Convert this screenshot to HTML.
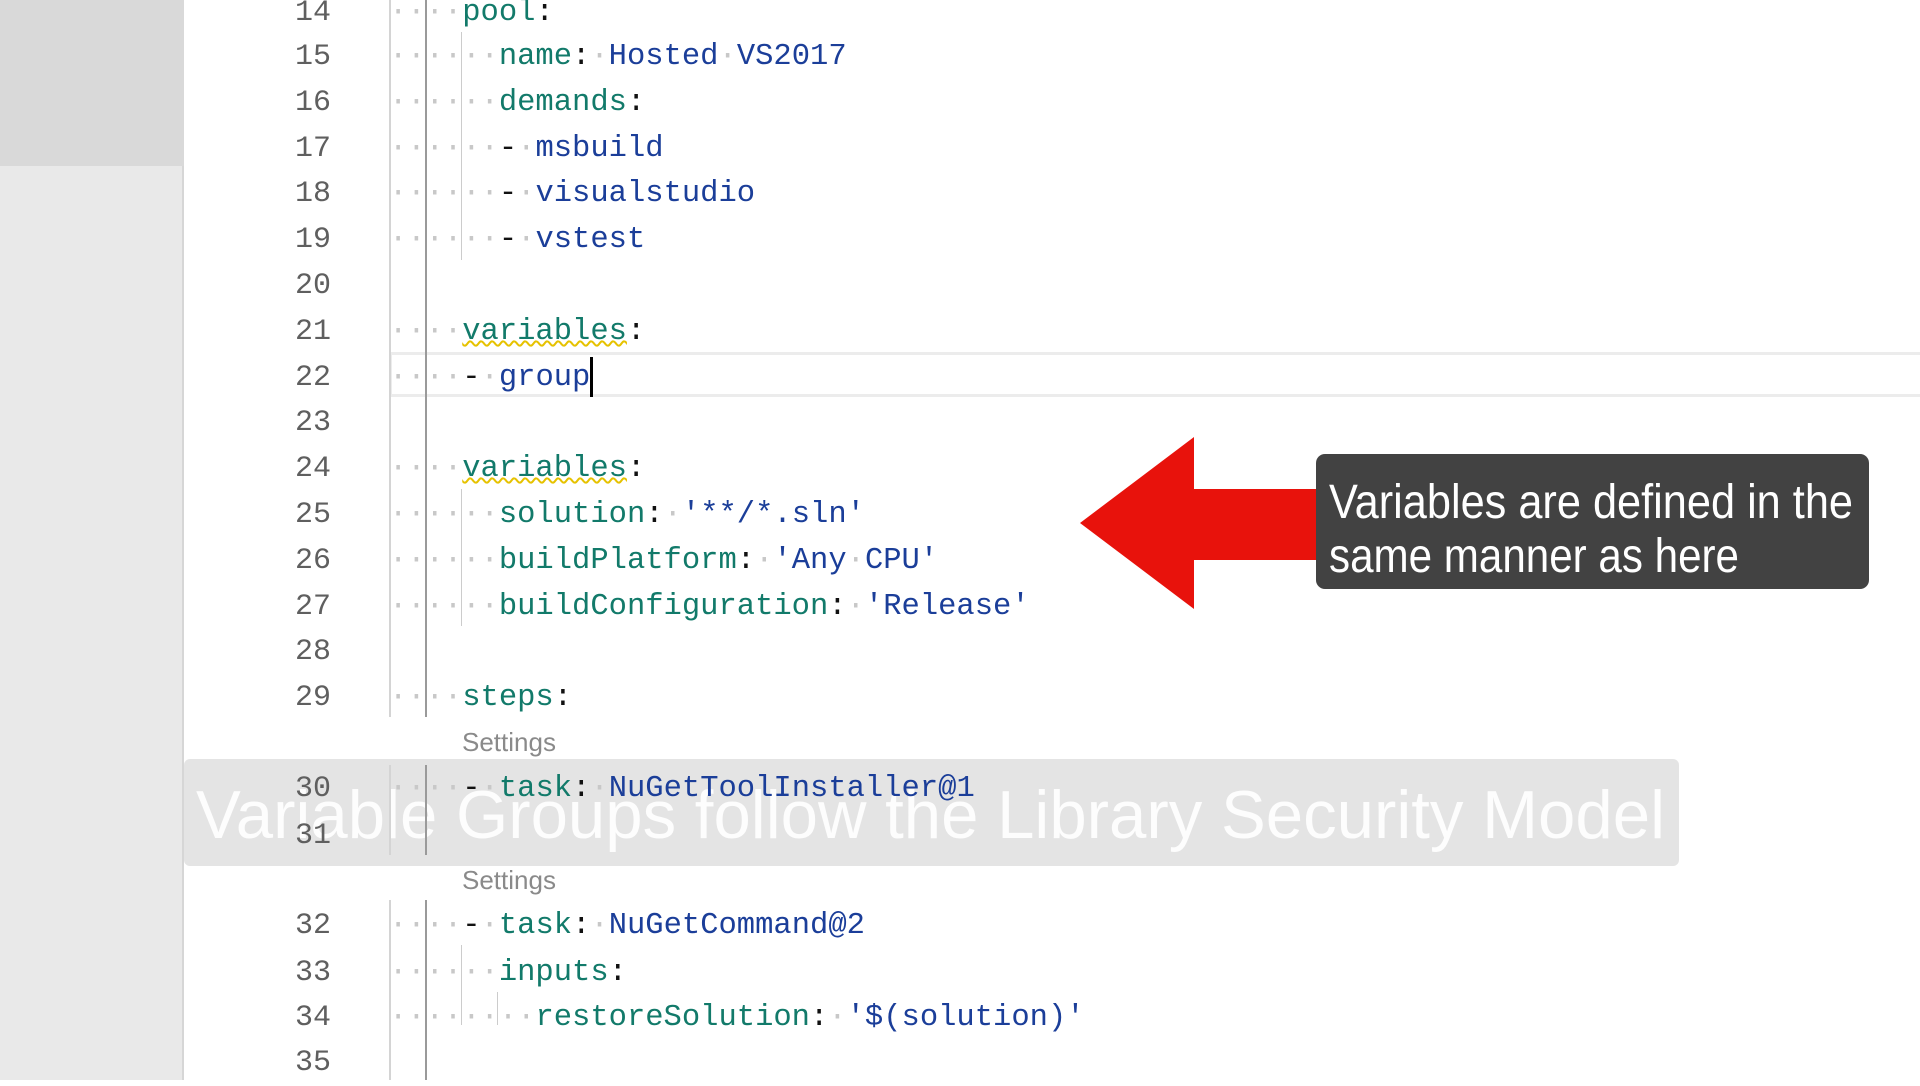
<!DOCTYPE html>
<html><head><meta charset="utf-8"><style>
*{margin:0;padding:0}
body{width:1920px;height:1080px;overflow:hidden;background:#fff;position:relative;font-family:"Liberation Mono",monospace}
.g1{position:absolute;left:0;top:0;width:184px;height:166px;background:#d9d9d9}
.g2{position:absolute;left:0;top:166px;width:184px;height:914px;background:#e9e9e9;border-right:2px solid #d6d6d6;box-sizing:border-box}
.ln{position:absolute;left:200px;width:131px;text-align:right;font-size:30px;color:#5f5f5f;line-height:46px;height:46px;margin-top:3px}
.cd{position:absolute;left:389px;font-size:30.5px;line-height:46px;height:46px;white-space:pre;color:#111;margin-top:3px}
.d{color:#c8c8c8}
.k{color:#127a6a}
.v{color:#1b3e99}
.st{position:absolute;left:462px;font-family:"Liberation Sans",sans-serif;font-size:26px;color:#8a8a8a;line-height:30px}
.vl{position:absolute;width:2px}
</style></head><body>
<div class="g1"></div><div class="g2"></div>
<div style="position:absolute;left:389px;top:352px;width:1531px;height:45px;border-top:3px solid #ececec;border-bottom:3px solid #ececec;border-left:3px solid #ececec;box-sizing:border-box"></div>

<div style="position:absolute;left:184px;top:759px;width:1495px;height:107px;background:rgba(205,205,205,0.55);border-radius:6px"></div>
<svg style="position:absolute;left:0;top:0" width="1920" height="1080">
<text x="196" y="838" textLength="1469" lengthAdjust="spacingAndGlyphs" font-family="Liberation Sans, sans-serif" font-size="68" fill="rgba(255,255,255,0.9)">Variable Groups follow the Library Security Model</text>
</svg>

<div class="vl" style="left:389px;top:0;height:717px;background:#d4d4d4"></div>
<div class="vl" style="left:425px;top:0;height:717px;background:#9a9a9a"></div>
<div class="vl" style="left:389px;top:765px;height:90px;background:#d4d4d4"></div>
<div class="vl" style="left:425px;top:765px;height:90px;background:#9a9a9a"></div>
<div class="vl" style="left:389px;top:900px;height:180px;background:#d4d4d4"></div>
<div class="vl" style="left:425px;top:900px;height:180px;background:#9a9a9a"></div>
<div class="vl" style="left:461px;top:32px;height:228px;width:1px;background:#ccc"></div>
<div class="vl" style="left:461px;top:489px;height:137px;width:1px;background:#ccc"></div>
<div class="vl" style="left:461px;top:945px;height:80px;width:1px;background:#ccc"></div>
<div class="vl" style="left:497px;top:992px;height:33px;width:1px;background:#ccc"></div>

<div class="ln" style="top:-13px">14</div><div class="cd" style="top:-13px"><span class="d">····</span><span class="k">pool</span>:</div>
<div class="ln" style="top:31px">15</div><div class="cd" style="top:31px"><span class="d">······</span><span class="k">name</span>:<span class="d">·</span><span class="v">Hosted<span class="d">·</span>VS2017</span></div>
<div class="ln" style="top:77px">16</div><div class="cd" style="top:77px"><span class="d">······</span><span class="k">demands</span>:</div>
<div class="ln" style="top:123px">17</div><div class="cd" style="top:123px"><span class="d">······</span>-<span class="d">·</span><span class="v">msbuild</span></div>
<div class="ln" style="top:168px">18</div><div class="cd" style="top:168px"><span class="d">······</span>-<span class="d">·</span><span class="v">visualstudio</span></div>
<div class="ln" style="top:214px">19</div><div class="cd" style="top:214px"><span class="d">······</span>-<span class="d">·</span><span class="v">vstest</span></div>
<div class="ln" style="top:260px">20</div>
<div class="ln" style="top:306px">21</div><div class="cd" style="top:306px"><span class="d">····</span><span class="k" style="text-decoration:underline wavy #e6c200;text-decoration-thickness:2px">variables</span>:</div>
<div class="ln" style="top:352px">22</div><div class="cd" style="top:352px"><span class="d">····</span>-<span class="d">·</span><span class="v">group</span><span style="display:inline-block;width:3px;height:40px;background:#000;vertical-align:middle"></span></div>
<div class="ln" style="top:397px">23</div>
<div class="ln" style="top:443px">24</div><div class="cd" style="top:443px"><span class="d">····</span><span class="k" style="text-decoration:underline wavy #e6c200;text-decoration-thickness:2px">variables</span>:</div>
<div class="ln" style="top:489px">25</div><div class="cd" style="top:489px"><span class="d">······</span><span class="k">solution</span>:<span class="d">·</span><span class="v">'**/*.sln'</span></div>
<div class="ln" style="top:535px">26</div><div class="cd" style="top:535px"><span class="d">······</span><span class="k">buildPlatform</span>:<span class="d">·</span><span class="v">'Any<span class="d">·</span>CPU'</span></div>
<div class="ln" style="top:581px">27</div><div class="cd" style="top:581px"><span class="d">······</span><span class="k">buildConfiguration</span>:<span class="d">·</span><span class="v">'Release'</span></div>
<div class="ln" style="top:626px">28</div>
<div class="ln" style="top:672px">29</div><div class="cd" style="top:672px"><span class="d">····</span><span class="k">steps</span>:</div>
<div class="st" style="top:727px">Settings</div>
<div class="ln" style="top:763px">30</div><div class="cd" style="top:763px"><span class="d">····</span>-<span class="d">·</span><span class="k">task</span>:<span class="d">·</span><span class="v">NuGetToolInstaller@1</span></div>
<div class="ln" style="top:810px">31</div>
<div class="st" style="top:865px">Settings</div>
<div class="ln" style="top:900px">32</div><div class="cd" style="top:900px"><span class="d">····</span>-<span class="d">·</span><span class="k">task</span>:<span class="d">·</span><span class="v">NuGetCommand@2</span></div>
<div class="ln" style="top:947px">33</div><div class="cd" style="top:947px"><span class="d">······</span><span class="k">inputs</span>:</div>
<div class="ln" style="top:992px">34</div><div class="cd" style="top:992px"><span class="d">········</span><span class="k">restoreSolution</span>:<span class="d">·</span><span class="v">'$(solution)'</span></div>
<div class="ln" style="top:1037px">35</div>

<svg style="position:absolute;left:0;top:0" width="1920" height="1080">
<polygon points="1080,523 1194,437 1194,489 1318,489 1318,560 1194,560 1194,609" fill="#e8120c"/>
<rect x="1316" y="454" width="553" height="135" rx="9" fill="#424242"/>
<text x="1329" y="518" textLength="524" lengthAdjust="spacingAndGlyphs" font-family="Liberation Sans, sans-serif" font-size="48" fill="#fff">Variables are defined in the</text>
<text x="1329" y="572" textLength="410" lengthAdjust="spacingAndGlyphs" font-family="Liberation Sans, sans-serif" font-size="48" fill="#fff">same manner as here</text>
</svg>
</body></html>
